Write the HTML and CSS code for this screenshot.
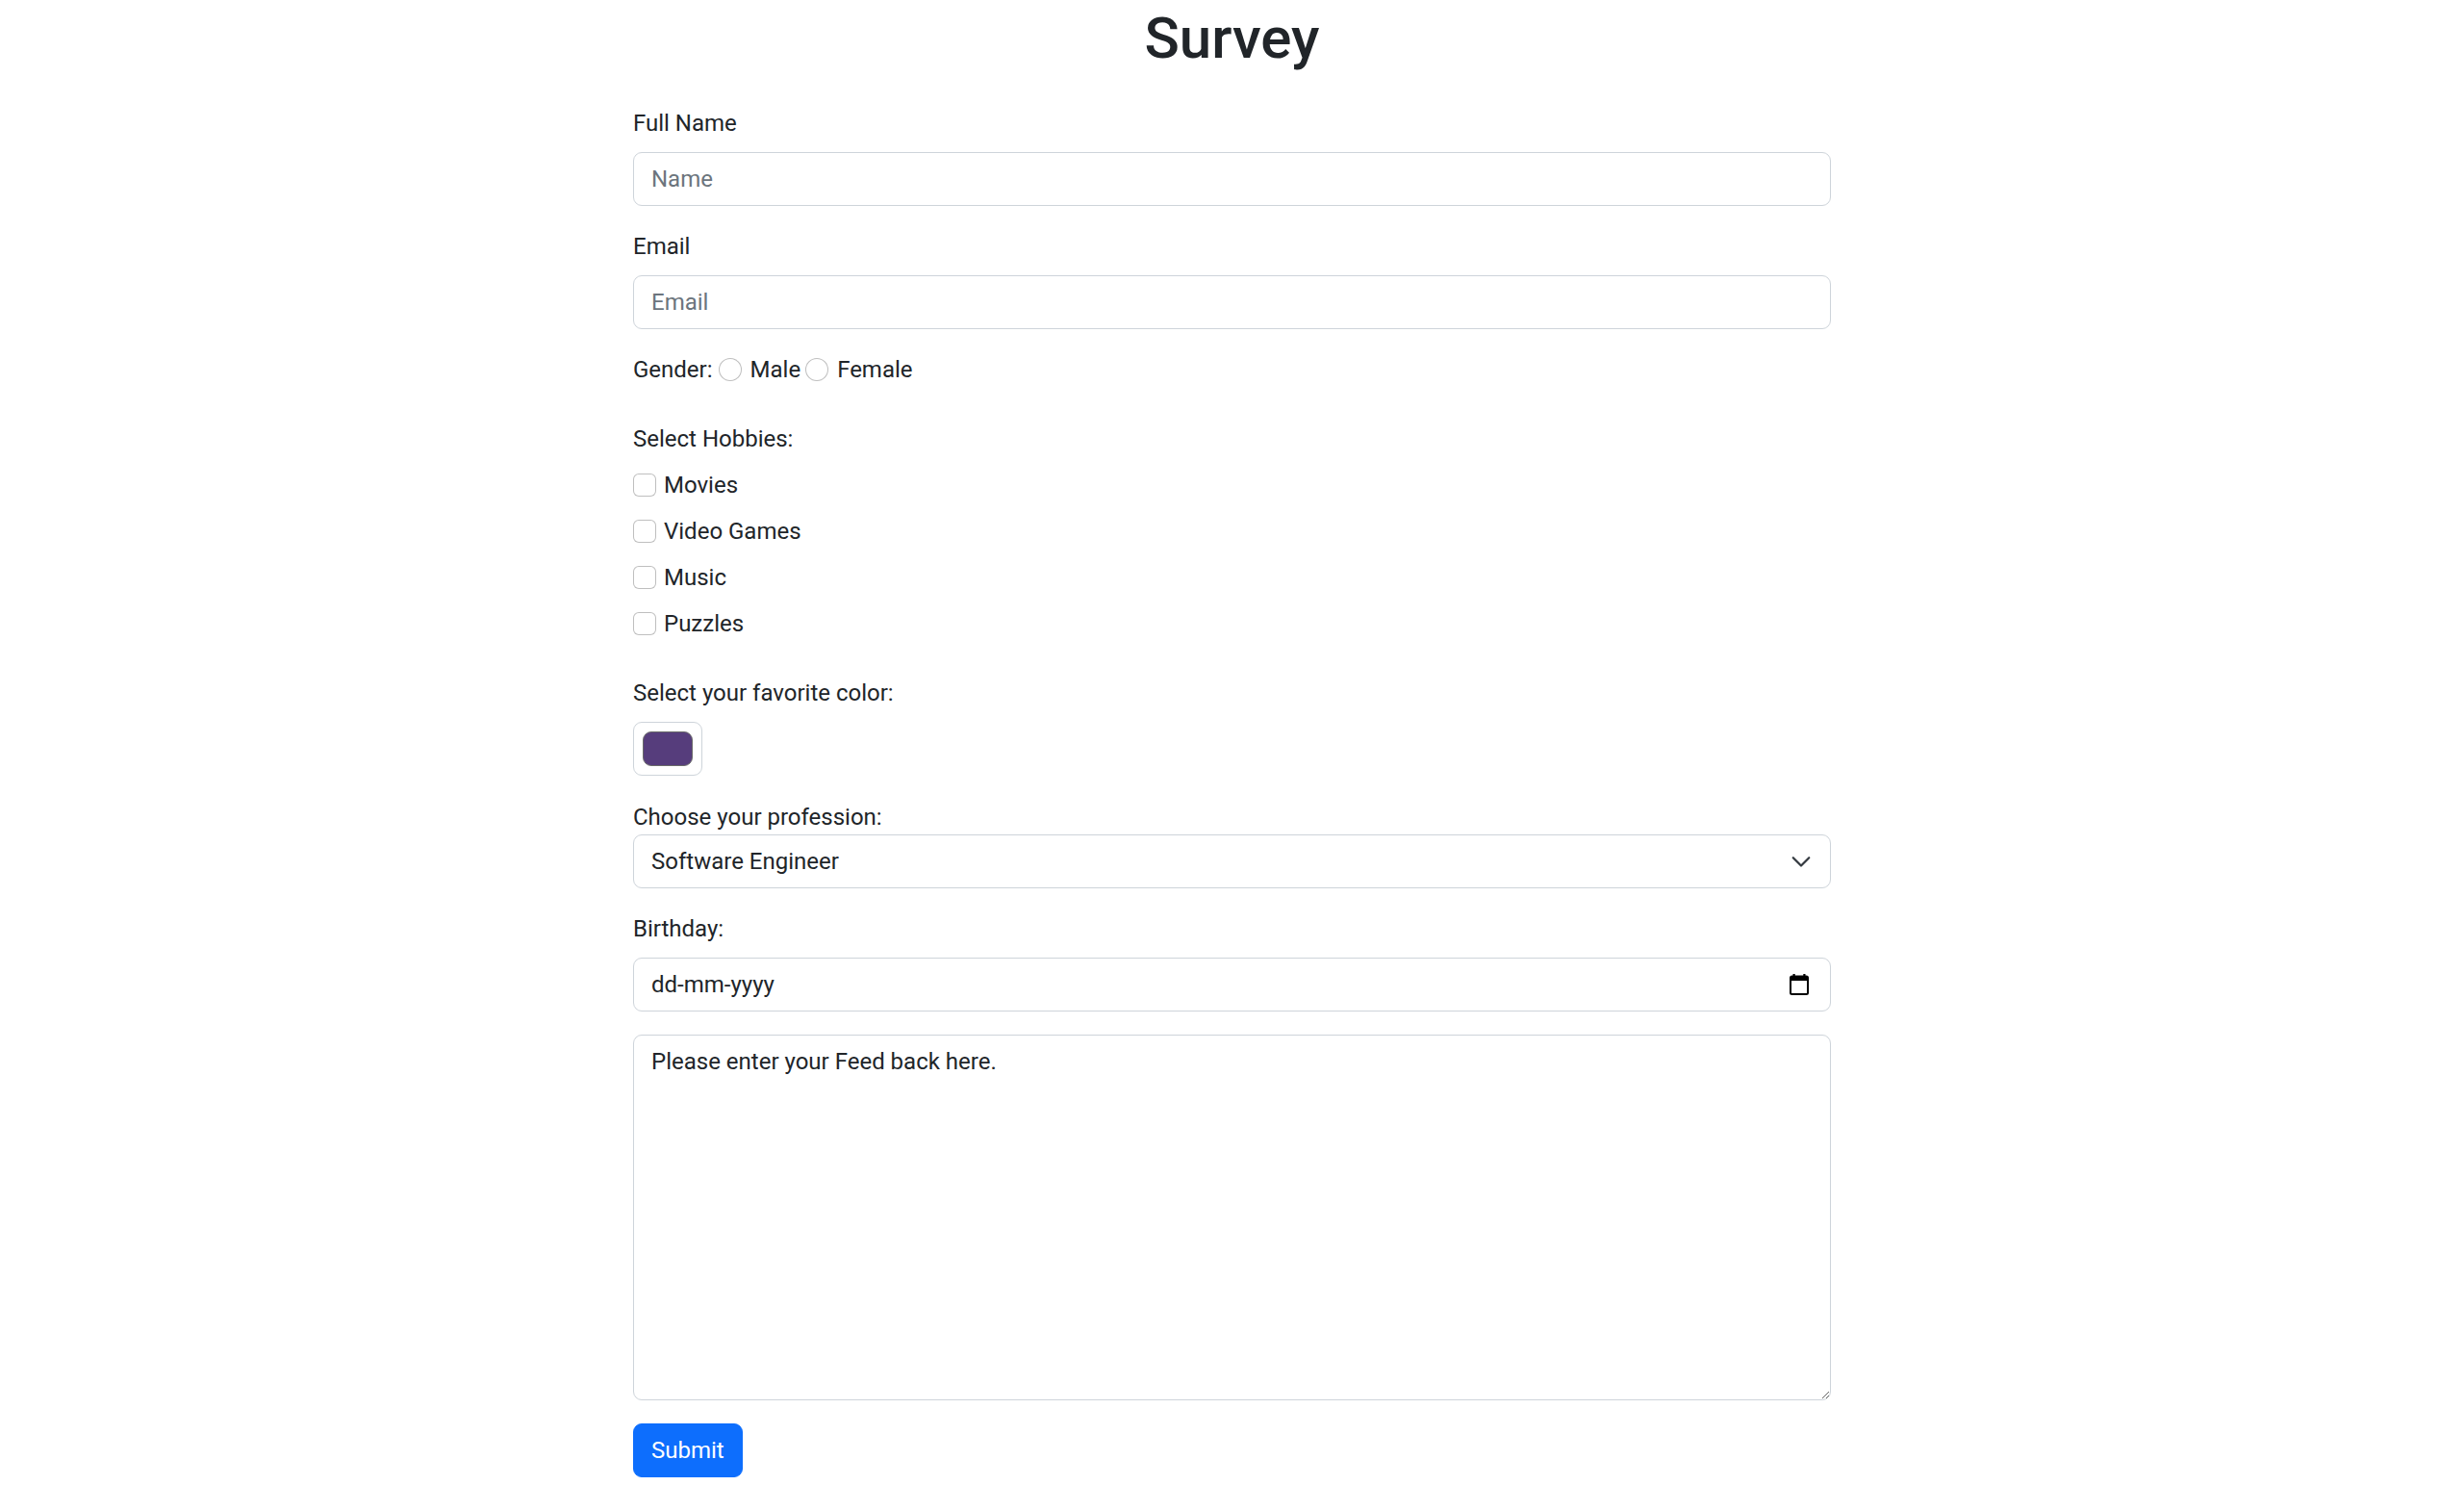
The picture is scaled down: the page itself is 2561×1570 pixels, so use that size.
FILE: index.html
```html
<!DOCTYPE html>
<html lang="en">
<head>
<meta charset="utf-8">
<title>Survey</title>
<link rel="stylesheet" href="styles.css">
</head>
<body>
<h1 class="title">Survey</h1>
<form class="survey">
  <div class="field">
    <label class="form-label" for="name">Full Name</label>
    <input class="form-control" id="name" type="text" placeholder="Name">
  </div>
  <div class="field">
    <label class="form-label" for="email">Email</label>
    <input class="form-control" id="email" type="email" placeholder="Email">
  </div>
  <div class="gender">
    <span>Gender:</span>
    <input class="radio" type="radio" name="gender" id="male">
    <label for="male">Male</label>
    <input class="radio" type="radio" name="gender" id="female">
    <label for="female">Female</label>
  </div>
  <div class="hobbies">
    <div class="hobbies-label">Select Hobbies:</div>
    <div class="check"><input class="checkbox" type="checkbox" id="h1"><label for="h1">Movies</label></div>
    <div class="check"><input class="checkbox" type="checkbox" id="h2"><label for="h2">Video Games</label></div>
    <div class="check"><input class="checkbox" type="checkbox" id="h3"><label for="h3">Music</label></div>
    <div class="check"><input class="checkbox" type="checkbox" id="h4"><label for="h4">Puzzles</label></div>
  </div>
  <div class="field">
    <label class="form-label" for="color">Select your favorite color:</label>
    <input class="color-input" id="color" type="color" value="#563d7c">
  </div>
  <div class="field">
    <div class="plain-label">Choose your profession:</div>
    <div class="select-box">
      <span>Software Engineer</span>
      <svg class="chev" width="24" height="18" viewBox="0 0 16 12"><path fill="none" stroke="#343a40" stroke-linecap="round" stroke-linejoin="round" stroke-width="1.5" d="M2.5 3.5l5.5 5.5 5.5-5.5"/></svg>
    </div>
  </div>
  <div class="field">
    <div class="form-label">Birthday:</div>
    <div class="date-box">
      <span>dd-mm-yyyy</span>
      <svg class="cal" width="20" height="22" viewBox="0 0 20 22"><path d="M3.5 0h2.2v3.5H3.5zM14.3 0h2.2v3.5h-2.2z" fill="#000"/><rect x="1" y="2.5" width="18" height="18.5" rx="1.5" fill="none" stroke="#000" stroke-width="2"/><rect x="1" y="2.5" width="18" height="4.5" fill="#000"/></svg>
    </div>
  </div>
  <div class="field">
    <textarea class="form-control feedback" rows="10">Please enter your Feed back here.</textarea>
  </div>
  <button class="btn-submit" type="submit">Submit</button>
</form>
</body>
</html>
```
FILE: styles.css
```css
* { box-sizing: border-box; }

body {
  margin: 0;
  font-family: Roboto, "Liberation Sans", sans-serif;
  font-size: 24px;
  line-height: 1.5;
  color: #212529;
  background: #fff;
}

.title {
  margin: 0 0 12px;
  padding-top: 4px;
  font-size: 60px;
  font-weight: 500;
  line-height: 1.2;
  text-align: center;
}

.survey {
  width: 1245px;
  margin: 0 auto;
  padding-top: 22px;
}

.field { margin-bottom: 24px; }

.form-label {
  display: block;
  margin-bottom: 12px;
}

.plain-label { display: block; padding-top: 1px; }

.form-control {
  display: block;
  width: 100%;
  height: 56px;
  padding: 9px 18px;
  font: inherit;
  color: #212529;
  background: #fff;
  border: 1px solid #ced4da;
  border-radius: 9px;
  outline: none;
}

.form-control::placeholder { color: #6c757d; opacity: 1; }

.gender {
  display: flex;
  align-items: center;
  height: 36px;
  margin-bottom: 36px;
}

.gender span { margin-right: 6px; }
.gender label { margin-left: 9px; margin-right: 5px; }

.radio, .checkbox {
  appearance: none;
  -webkit-appearance: none;
  width: 24px;
  height: 24px;
  margin: 0;
  border: 1px solid rgba(0, 0, 0, 0.25);
  background: #fff;
  flex: none;
}

.radio { border-radius: 50%; }
.checkbox { border-radius: 6px; }

.hobbies {
  display: flex;
  flex-direction: column;
  gap: 12px;
  padding-bottom: 36px;
}

.check {
  display: flex;
  align-items: center;
  gap: 8px;
  height: 36px;
}

.color-input {
  display: block;
  width: 72px;
  height: 56px;
  padding: 9px;
  border: 1px solid #ced4da;
  border-radius: 9px;
  background: #fff;
  cursor: pointer;
  -webkit-appearance: none;
  appearance: none;
}

.color-input::-webkit-color-swatch-wrapper { padding: 0; }
.color-input::-webkit-color-swatch {
  border: 1px solid #6a6a6a;
  border-radius: 9px;
}

.select-box, .date-box {
  display: flex;
  align-items: center;
  justify-content: space-between;
  height: 56px;
  padding: 9px 18px;
  border: 1px solid #ced4da;
  border-radius: 9px;
  background: #fff;
}

.chev { display: block; }
.cal { display: block; margin-right: 4px; }

.feedback {
  height: 380px;
  resize: vertical;
}

.btn-submit {
  display: inline-block;
  height: 56px;
  padding: 9px 18px;
  font: inherit;
  color: #fff;
  background: #0d6efd;
  border: 1px solid #0d6efd;
  border-radius: 9px;
  cursor: pointer;
}
```
